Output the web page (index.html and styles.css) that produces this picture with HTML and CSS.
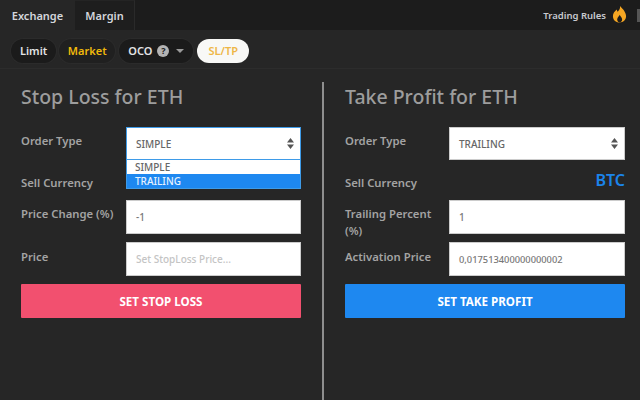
FILE: index.html
```html
<!DOCTYPE html>
<html lang="en">
<head>
<meta charset="utf-8">
<title>Stop Loss / Take Profit</title>
<link rel="stylesheet" href="styles.css">
</head>
<body>
<header class="topbar">
  <nav class="tabs">
    <span class="tab tab-active">Exchange</span>
    <span class="tab">Margin</span>
  </nav>
  <div class="rules">
    <span>Trading Rules</span>
    <svg class="flame" viewBox="0 0 16 18" width="15" height="17" aria-hidden="true">
      <path fill="#f5a623" d="M8.5 0c.6 3-1 4.400-2.400 6C5.500 5.300 5.200 4.500 5.200 3.600 2.600 5.400 1 8 1 10.800 1 14.800 4 17.500 8 17.500s7-2.700 7-6.600C15 6.800 11.800 3.400 8.500 0z"/>
      <path fill="#1c1c1c" d="M8.200 9.200c-.2 1.600-2.700 2.600-2.700 5 0 1.500 1.100 3.300 2.600 3.300s2.700-1.500 2.700-3.200c0-2-1.800-3.300-2.600-5.100z"/>
    </svg>
    <span class="stub"></span>
  </div>
</header>
<div class="pills">
  <span class="pill">Limit</span>
  <span class="pill pill-market">Market</span>
  <span class="pill pill-oco">OCO
    <span class="help">?</span>
    <span class="caret"></span>
  </span>
  <span class="pill pill-active">SL/TP</span>
</div>
<main class="panels">
  <section class="panel panel-left">
    <h2 class="title">Stop Loss for ETH</h2>
    <div class="form">
      <label class="label">Order Type</label>
      <div class="select-wrap">
        <div class="field select select-open">SIMPLE
          <svg class="updown" viewBox="0 0 7 11" width="7" height="11" aria-hidden="true"><path fill="#555" d="M3.500 0 7 4.500H0zM3.500 11 0 6.500h7z"/></svg>
        </div>
        <div class="dropdown">
          <div class="option">SIMPLE</div>
          <div class="option option-on">TRAILING</div>
        </div>
      </div>
      <label class="label label-currency">Sell Currency</label>
      <div class="currency"></div>
      <label class="label">Price Change (%)</label>
      <div class="field">-1</div>
      <label class="label label-last">Price</label>
      <div class="field placeholder">Set StopLoss Price...</div>
    </div>
    <button class="action action-red">SET STOP LOSS</button>
  </section>
  <section class="panel panel-right">
    <h2 class="title">Take Profit for ETH</h2>
    <div class="form">
      <label class="label">Order Type</label>
      <div class="field select">TRAILING
        <svg class="updown" viewBox="0 0 7 11" width="7" height="11" aria-hidden="true"><path fill="#555" d="M3.500 0 7 4.500H0zM3.500 11 0 6.500h7z"/></svg>
      </div>
      <label class="label label-currency">Sell Currency</label>
      <div class="currency">BTC</div>
      <label class="label label-wrap">Trailing Percent (%)</label>
      <div class="field">1</div>
      <label class="label label-last">Activation Price</label>
      <div class="field field-num">0,017513400000000002</div>
    </div>
    <button class="action action-blue">SET TAKE PROFIT</button>
  </section>
</main>
</body>
</html>
```
FILE: styles.css
```css
* { box-sizing: border-box; }
html, body { height: 100%; }
body {
  margin: 0;
  height: 400px;
  overflow: hidden;
  background: #262626;
  color: #a3a3a3;
  font-family: "Noto Sans", "Open Sans", sans-serif;
  display: flex;
  flex-direction: column;
}
.topbar {
  height: 30px;
  flex: none;
  background: #1c1c1c;
  display: flex;
  justify-content: space-between;
  align-items: stretch;
}
.tabs { display: flex; }
.tab {
  width: 60px;
  display: flex;
  align-items: center;
  justify-content: center;
  font-size: 11px;
  font-weight: 600;
  color: #d4d6dc;
  background: #1e1e1e;
  border-right: 1px solid #2a2a2a;
  border-top: 1px solid #242424;
}
.tab-active { width: 75px; background: #262626; border: 0; }
.rules {
  display: flex;
  align-items: center;
  gap: 6px;
  font-size: 9.500px;
  font-weight: 600;
  color: #c8cacf;
}
.flame { margin-top: -1px; margin-right: 4px; }
.stub { width: 3px; height: 13px; background: #555; }
.pills {
  height: 39px;
  flex: none;
  display: flex;
  align-items: center;
  gap: 3px;
  padding: 3px 0 0 11px;
  border-bottom: 1px solid #2c2c2c;
}
.pill {
  height: 24px;
  padding: 0 9px;
  display: flex;
  align-items: center;
  border-radius: 12px;
  background: #1b1b1b;
  color: #e2e3e6;
  font-size: 11px;
  font-weight: 600;
  box-shadow: 0 0 0 1px #2b2b2b;
}
.pill-market { color: #f0b90b; background: #202020; width: 56px; padding: 0; justify-content: center; }
.pill-oco { gap: 5px; padding: 0 7px 0 9px; margin-left: 1px; width: 74px; }
.pill-active { color: #eeb646; background: #f8f8f6; width: 52px; padding: 0; justify-content: center; margin-left: 1px; box-shadow: none; }
.help {
  width: 12px;
  height: 12px;
  border-radius: 50%;
  background: #b4b4b4;
  color: #1b1b1b;
  font-size: 9px;
  font-weight: 700;
  display: flex;
  align-items: center;
  justify-content: center;
}
.caret {
  width: 0;
  height: 0;
  margin-left: 2px;
  border: 4px solid transparent;
  border-top: 4px solid #9a9a9a;
  border-bottom: 0;
}
.panels { flex: 1; display: flex; }
.panel { margin-top: 13px; display: flex; flex-direction: column; }
.panel-left { width: 324px; padding-left: 21px; padding-right: 22px; border-right: 2px solid #8e8e8e; }
.panel-right { width: 316px; padding-left: 21px; padding-right: 15px; }
.title {
  margin: 0 0 18px;
  height: 27px;
  line-height: 29px;
  font-size: 19.500px;
  font-weight: 500;
  color: #9d9d9d;
}
.form {
  display: grid;
  grid-template-columns: 105px 175px;
  grid-template-rows: 33px 32px 38px 34px;
  row-gap: 4px;
}
.panel-right .form { grid-template-columns: 104px 176px; }
.label {
  font-size: 11.300px;
  font-weight: 600;
  line-height: 17px;
  color: #a3a3a3;
  padding-top: 5px;
}
.label-wrap { padding-right: 8px; }
.label-last { padding-top: 6px; }
.label-currency { padding-top: 10px; }
.field {
  height: 33px;
  background: #fff;
  color: #777;
  font-size: 10px;
  font-weight: 500;
  display: flex;
  align-items: center;
  padding: 0 9px;
  border: 1px solid #ccc;
}
.form > .field { height: 34px; }
.form > .select { height: 33px; }
.field-num { font-size: 9.300px; }
.placeholder { color: #c4c4c4; }
.select { justify-content: space-between; padding-right: 6px; color: #666; }
.select-open { border: 1px solid #3e9be8; }
.select-wrap { position: relative; }
.dropdown {
  position: absolute;
  left: 0;
  right: 0;
  top: 33px;
  height: 29px;
  background: #fff;
  border: 1px solid #3e9be8;
  border-top: 0;
  color: #666;
  font-size: 10px;
  font-weight: 500;
  line-height: 14px;
}
.option { padding: 0 8px; height: 14px; }
.option-on { background: #1e88f0; color: #e6f2ff; }
.currency {
  text-align: right;
  color: #1b84ea;
  font-size: 16px;
  font-weight: 600;
  line-height: 20px;
  padding-top: 6px;
}
.action {
  display: block;
  width: 280px;
  height: 34px;
  margin-top: 8px;
  flex: none;
  border: 0;
  border-radius: 1px;
  color: #fff;
  font-family: inherit;
  font-size: 11.600px;
  font-weight: 700;
}
.action-red { background: #f2506f; }
.action-blue { background: #1e88f0; }
```
